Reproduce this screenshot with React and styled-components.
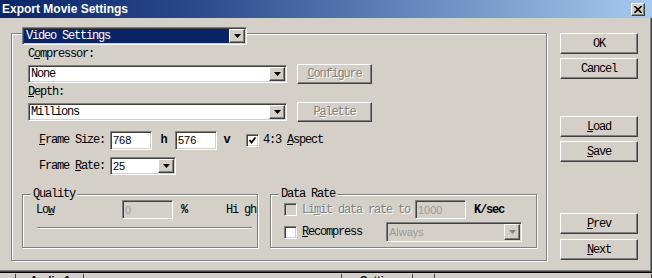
import React from 'react';
import styled, { createGlobalStyle, css } from 'styled-components';

const face = '#d4d0c8';

const GlobalStyle = createGlobalStyle`
  html, body { margin: 0; padding: 0; background: ${face}; }
  body {
    font-family: "Liberation Mono", "DejaVu Sans Mono", monospace;
    font-size: 12px;
    letter-spacing: -1.2px;
    color: #000;
    white-space: nowrap;
  }
`;

const raised = css`
  border: 1px solid;
  border-color: #fff #404040 #404040 #fff;
  box-shadow: inset -1px -1px 0 #808080, inset 1px 1px 0 ${face};
`;

const sunken = css`
  border: 1px solid;
  border-color: #808080 #fff #fff #808080;
  box-shadow: inset 1px 1px 0 #404040, inset -1px -1px 0 ${face};
`;

const etched = css`
  border: 1px solid #808080;
  box-shadow: inset 1px 1px 0 #fff, 1px 1px 0 #fff;
`;

const Window = styled.div`
  width: 652px;
  height: 278px;
  display: flex;
  flex-direction: column;
  overflow: hidden;
  background: ${face};
`;

const TitleBar = styled.div`
  flex: none;
  height: 18px;
  box-sizing: border-box;
  padding: 0 7px 0 2px;
  display: flex;
  align-items: center;
  justify-content: space-between;
  background: linear-gradient(to right, #0a246a 0%, #2a4a8c 30%, #a6caf0 100%);
`;

const Title = styled.span`
  font-family: "Liberation Sans", Arial, sans-serif;
  font-weight: bold;
  font-size: 12px;
  letter-spacing: 0;
  color: #fff;
`;

const CloseBox = styled.span`
  ${raised};
  background: ${face};
  width: 14px;
  height: 13px;
  box-sizing: border-box;
  display: flex;
  align-items: center;
  justify-content: center;
`;

const Frame = styled.div`
  flex: none;
  height: 254px;
  box-sizing: border-box;
  display: flex;
  align-items: flex-start;
  border-right: 1px solid #404040;
  border-bottom: 1px solid #404040;
  box-shadow: inset -1px -1px 0 #808080;
`;

const MainGroup = styled.div`
  ${etched};
  box-sizing: border-box;
  width: 536px;
  height: 228px;
  margin: 15px 0 0 11px;
  display: flex;
  flex-direction: column;
`;

const Header = styled.div`
  margin: -7px 0 0 10px;
`;

const FieldLabel = styled.div`
  height: 16px;
  line-height: 16px;
  margin: ${p => p.$mt || 0}px 0 0 16px;
`;

const ComboRow = styled.div`
  height: 20px;
  margin: 2px 0 0 16px;
  display: flex;
  align-items: center;
  gap: 10px;
`;

const ComboBox = styled.div`
  ${sunken};
  box-sizing: border-box;
  width: ${p => p.$w}px;
  height: ${p => p.$h || 18}px;
  padding: 1px;
  display: flex;
  background: ${p => (p.$disabled ? face : '#fff')};
`;

const ComboText = styled.span`
  flex: 1;
  display: flex;
  align-items: center;
  padding-left: ${p => (p.$selected ? 2 : 1)}px;
  background: ${p => (p.$selected ? '#0a246a' : 'transparent')};
  color: ${p => (p.$selected ? '#fff' : p.$disabled ? '#9a9a9a' : '#000')};
  font-family: ${p => (p.$sans ? '"Liberation Sans", Arial, sans-serif' : 'inherit')};
  font-size: ${p => (p.$sans ? '11px' : 'inherit')};
  letter-spacing: ${p => (p.$sans ? '0' : 'inherit')};
`;

const ArrowButton = styled.span`
  ${raised};
  flex: none;
  width: 16px;
  box-sizing: border-box;
  background: ${face};
  display: flex;
  align-items: center;
  justify-content: center;
`;

const PushButton = styled.button`
  ${raised};
  margin: 0;
  padding: 0;
  outline: none;
  background: ${face};
  width: ${p => p.$w}px;
  height: ${p => p.$h || 20}px;
  flex: none;
  font-family: inherit;
  font-size: 12px;
  letter-spacing: -1.2px;
  color: ${p => (p.disabled ? '#808080' : '#000')};
  text-shadow: ${p => (p.disabled ? '1px 1px 0 #fff' : 'none')};
`;

const ParamRow = styled.div`
  height: 20px;
  margin-top: ${p => p.$mt}px;
  padding-left: 27px;
  display: flex;
  align-items: center;
`;

const ParamLabel = styled.span`
  width: 71px;
  flex: none;
`;

const EditBox = styled.div`
  ${sunken};
  box-sizing: border-box;
  flex: none;
  width: ${p => p.$w}px;
  height: 19px;
  margin-left: ${p => p.$ml || 0}px;
  padding-left: 2px;
  display: flex;
  align-items: center;
  background: ${p => (p.$disabled ? face : '#fff')};
  color: ${p => (p.$disabled ? '#9a9a9a' : '#000')};
  font-family: "Liberation Sans", Arial, sans-serif;
  font-size: 11px;
  letter-spacing: 0;
`;

const Unit = styled.span`
  flex: none;
  width: ${p => p.$w}px;
  text-align: center;
  font-weight: bold;
`;

const CheckBox = styled.span`
  ${sunken};
  box-sizing: border-box;
  flex: none;
  width: 13px;
  height: 13px;
  margin-left: ${p => p.$ml || 0}px;
  background: ${p => (p.$disabled ? face : '#fff')};
  display: flex;
  align-items: center;
  justify-content: center;
`;

const Caption = styled.span`
  flex: none;
  width: ${p => (p.$w ? `${p.$w}px` : 'auto')};
  margin-left: ${p => p.$ml || 0}px;
  color: ${p => (p.$disabled ? '#808080' : '#000')};
  text-shadow: ${p => (p.$disabled ? '1px 1px 0 #fff' : 'none')};
  font-weight: ${p => (p.$bold ? 'bold' : 'normal')};
`;

const U = styled.span`
  text-decoration: underline;
`;

const SubGroups = styled.div`
  display: flex;
  gap: 12px;
  margin: 18px 0 0 10px;
`;

const SubGroup = styled.div`
  ${etched};
  box-sizing: border-box;
  width: ${p => p.$w}px;
  height: 54px;
  display: flex;
  flex-direction: column;
`;

const Legend = styled.span`
  align-self: flex-start;
  height: 12px;
  line-height: 12px;
  margin: -7px 0 0 8px;
  padding: 0 2px;
  background: ${face};
`;

const GroupRow = styled.div`
  height: ${p => p.$h || 19}px;
  margin-top: ${p => p.$mt || 0}px;
  padding-left: 13px;
  display: flex;
  align-items: center;
`;

const SliderTrack = styled.div`
  margin: 8px 5px 0 14px;
  border-top: 1px solid #808080;
  border-bottom: 1px solid #fff;
`;

const SideColumn = styled.div`
  width: 78px;
  margin: 15px 0 0 13px;
  display: flex;
  flex-direction: column;
`;

const SideButton = styled(PushButton)`
  margin-top: ${p => p.$mt}px;
`;

const Strip = styled.div`
  flex: 1;
  display: flex;
  border-top: 1px solid #000;
  overflow: hidden;
`;

const StripCell = styled.div`
  width: ${p => p.$w}px;
  flex: none;
  box-sizing: border-box;
  border-right: 1px solid #404040;
  padding-left: ${p => p.$pl || 0}px;
  font-family: "Liberation Sans", Arial, sans-serif;
  font-weight: bold;
  font-size: 11px;
  letter-spacing: 0;
  line-height: 12px;
  margin-top: 1px;
`;

const Arrow = ({ disabled }) => (
  <svg width="7" height="4" viewBox="0 0 7 4">
    <polygon points="0,0 7,0 3.5,4" fill={disabled ? '#808080' : '#000'} />
  </svg>
);

const Tick = () => (
  <svg width="9" height="9" viewBox="0 0 9 9">
    <path d="M1.5 4 L3.5 6.5 L7.5 1.5" fill="none" stroke="#000" strokeWidth="1.8" />
  </svg>
);

const Combo = ({ w, h, selected, disabled, sans, children }) => (
  <ComboBox $w={w} $h={h} $disabled={disabled}>
    <ComboText $selected={selected} $disabled={disabled} $sans={sans}>{children}</ComboText>
    <ArrowButton><Arrow disabled={disabled} /></ArrowButton>
  </ComboBox>
);

export default function App() {
  return (
    <>
      <GlobalStyle />
      <Window>
        <TitleBar>
          <Title>Export Movie Settings</Title>
          <CloseBox>
            <svg width="8" height="7" viewBox="0 0 8 7">
              <path d="M0.5 0 L7.5 7 M7.5 0 L0.5 7" stroke="#000" strokeWidth="1.6" />
            </svg>
          </CloseBox>
        </TitleBar>

        <Frame>
          <MainGroup>
            <Header>
              <Combo w={225} selected>Video Settings</Combo>
            </Header>

            <FieldLabel $mt={1}>C<U>o</U>mpressor:</FieldLabel>
            <ComboRow>
              <Combo w={259}>None</Combo>
              <PushButton disabled $w={75}><U>C</U>onfigure</PushButton>
            </ComboRow>

            <FieldLabel><U>D</U>epth:</FieldLabel>
            <ComboRow>
              <Combo w={259}>Millions</Combo>
              <PushButton disabled $w={75}>P<U>a</U>lette</PushButton>
            </ComboRow>

            <ParamRow $mt={8}>
              <ParamLabel><U>F</U>rame Size:</ParamLabel>
              <EditBox $w={42}>768</EditBox>
              <Unit $w={23}>h</Unit>
              <EditBox $w={42}>576</EditBox>
              <Unit $w={19}>v</Unit>
              <CheckBox $ml={10}><Tick /></CheckBox>
              <Caption $ml={4}>4:3 <U>A</U>spect</Caption>
            </ParamRow>

            <ParamRow $mt={6}>
              <ParamLabel>Frame <U>R</U>ate:</ParamLabel>
              <Combo w={66} sans>25</Combo>
            </ParamRow>

            <SubGroups>
              <SubGroup $w={236}>
                <Legend>Quality</Legend>
                <GroupRow>
                  <Caption $w={86}>Lo<U>w</U></Caption>
                  <EditBox $w={51} $disabled>0</EditBox>
                  <Caption $w={45} $ml={8} $bold>%</Caption>
                  <Caption>Hi gh</Caption>
                </GroupRow>
                <SliderTrack />
              </SubGroup>

              <SubGroup $w={267}>
                <Legend>Data Rate</Legend>
                <GroupRow>
                  <CheckBox $disabled />
                  <Caption $w={108} $ml={5} $disabled>Li<U>m</U>it data rate to</Caption>
                  <EditBox $w={51} $ml={5} $disabled>1000</EditBox>
                  <Caption $ml={8} $bold>K/sec</Caption>
                </GroupRow>
                <GroupRow $h={20} $mt={3}>
                  <CheckBox />
                  <Caption $w={84} $ml={5}><U>R</U>ecompress</Caption>
                  <Combo w={136} h={20} disabled sans>Always</Combo>
                </GroupRow>
              </SubGroup>
            </SubGroups>
          </MainGroup>

          <SideColumn>
            <SideButton $w={78} $h={21} $mt={0}>OK</SideButton>
            <SideButton $w={78} $h={21} $mt={4}>Cancel</SideButton>
            <SideButton $w={78} $h={21} $mt={37}><U>L</U>oad</SideButton>
            <SideButton $w={78} $h={21} $mt={4}><U>S</U>ave</SideButton>
            <SideButton $w={78} $h={21} $mt={51}><U>P</U>rev</SideButton>
            <SideButton $w={78} $h={21} $mt={5}><U>N</U>ext</SideButton>
          </SideColumn>
        </Frame>

        <Strip>
          <StripCell $w={16} />
          <StripCell $w={68} $pl={14}>Audio 1</StripCell>
          <StripCell $w={258} />
          <StripCell $w={71} $pl={18}>Settings</StripCell>
          <StripCell $w={22} />
          <StripCell $w={217} />
        </Strip>
      </Window>
    </>
  );
}
